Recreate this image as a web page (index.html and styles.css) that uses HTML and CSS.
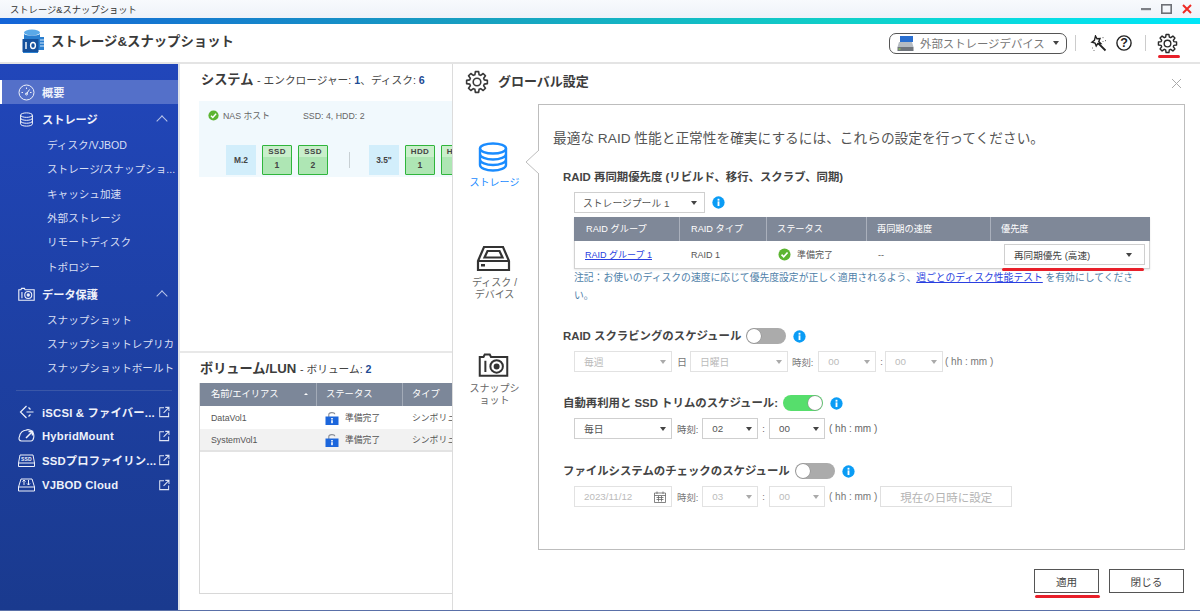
FILE: index.html
```html
<!DOCTYPE html>
<html lang="ja">
<head>
<meta charset="utf-8">
<title>ストレージ&amp;スナップショット</title>
<link rel="stylesheet" href="styles.css">
</head>
<body>
<svg class="defs" width="0" height="0" aria-hidden="true">
  <symbol id="gear" viewBox="0 0 24 24"><path fill="none" stroke="currentColor" stroke-width="1.6" stroke-linejoin="round" d="M9.91 4.69L10.36 1.63H13.64L14.09 4.69L15.68 5.35L18.17 3.51L20.49 5.83L18.65 8.32L19.31 9.91L22.37 10.36V13.64L19.31 14.09L18.65 15.68L20.49 18.17L18.17 20.49L15.68 18.65L14.09 19.31L13.64 22.37H10.36L9.91 19.31L8.32 18.65L5.83 20.49L3.51 18.17L5.35 15.68L4.69 14.09L1.63 13.64V10.36L4.69 9.91L5.35 8.32L3.51 5.83L5.83 3.51L8.32 5.35Z"/><circle cx="12" cy="12" r="3.8" fill="none" stroke="currentColor" stroke-width="1.6"/></symbol>
  <symbol id="ext" viewBox="0 0 14 14"><path fill="none" stroke="currentColor" stroke-width="1.2" d="M7 2H2V12.4H12.4V7.5M6.5 8L12.5 2M8.5 1.6H12.8V5.8"/></symbol>
  <symbol id="db" viewBox="0 0 24 24"><g fill="none" stroke="currentColor" stroke-width="1.6"><ellipse cx="12" cy="5" rx="9.5" ry="3.6"/><path d="M2.5 5V19C2.5 21 6.5 22.6 12 22.6S21.500 21 21.500 19V5M2.500 9.700C2.500 11.700 6.500 13.300 12 13.300S21.500 11.700 21.500 9.700M2.500 14.400C2.500 16.400 6.500 18 12 18S21.500 16.400 21.500 14.400"/></g></symbol>
  <symbol id="snap" viewBox="0 0 24 20"><g fill="none" stroke="currentColor" stroke-width="1.6"><path d="M1 4H4L5 2H9L10 4H23V19H1Z"/><path d="M5.500 7V16"/><circle cx="14.500" cy="11.500" r="5"/><circle cx="14.500" cy="11.500" r="1.600" fill="currentColor"/></g></symbol>
  <symbol id="info" viewBox="0 0 14 14"><circle cx="7" cy="7" r="6.600" fill="#0a9cf5"/><rect x="6" y="5.800" width="2" height="5" fill="#fff"/><rect x="6" y="3" width="2" height="2" fill="#fff"/></symbol>
  <symbol id="ok" viewBox="0 0 14 14"><circle cx="7" cy="7" r="6.500" fill="#5cb531"/><path d="M3.800 7.200L6.100 9.500L10.300 4.800" fill="none" stroke="#fff" stroke-width="1.800"/></symbol>
  <symbol id="lock" viewBox="0 0 14 14"><path d="M3.800 6V3.600C3.800 1 9.500 1 9.800 3.200" fill="none" stroke="#8a8f98" stroke-width="1.100"/><rect x="0.500" y="5.500" width="13" height="8.500" fill="#1c66dc"/><rect x="6.200" y="7" width="1.600" height="1.500" fill="#fff"/><rect x="6.200" y="9.200" width="1.600" height="3" fill="#fff"/></symbol>
</svg>

<div class="app">
  <div class="titlebar">
    <span class="titlebar-text">ストレージ&amp;スナップショット</span>
    <div class="win-controls">
      <svg width="10" height="10" viewBox="0 0 10 10"><rect y="4" width="10" height="2.200" fill="#7d8086"/></svg>
      <svg width="11" height="10" viewBox="0 0 11 10"><rect x="0.800" y="0.800" width="9.400" height="8.400" fill="none" stroke="#6d7076" stroke-width="1.600"/></svg>
      <svg width="10" height="10" viewBox="0 0 10 10"><path d="M1 1L9 9M9 1L1 9" stroke="#ee2b24" stroke-width="2"/></svg>
    </div>
  </div>
  <div class="rainbow"></div>

  <header class="header">
    <svg class="logo" width="24" height="24" viewBox="0 0 24 24">
      <ellipse cx="10" cy="3.500" rx="8" ry="3" fill="#5aa9e8"/>
      <path d="M2 5C4 7 16 7 18 5V8H22V21H16V24H1V11H2Z" fill="#2a7fd0"/>
      <rect x="0.500" y="10" width="16" height="13" fill="#14509c"/>
      <path d="M4 13V20M11 16.500m-2.400 0a2.400 3 0 1 0 4.800 0a2.400 3 0 1 0-4.800 0" fill="none" stroke="#fff" stroke-width="1.400"/>
      <path d="M18 11H22M18 14H22M18 17H22" stroke="#d5e8f8" stroke-width="1"/>
    </svg>
    <h1 class="app-title">ストレージ&amp;スナップショット</h1>
    <div class="header-tools">
      <div class="ext-pill">
        <svg width="17" height="15" viewBox="0 0 17 15"><rect x="3" y="0" width="13" height="6" fill="#2a6fd0"/><path d="M2 6H15L16.500 11H0.500Z" fill="#b5bbc2"/><rect x="0.500" y="11" width="16" height="4" fill="#70757c"/><rect x="1.500" y="12.500" width="2" height="1" fill="#9be04a"/></svg>
        <span class="ext-pill-label">外部ストレージデバイス</span>
        <i class="caret caret-dark"></i>
      </div>
      <i class="tool-sep"></i>
      <svg class="wand" width="17" height="17" viewBox="0 0 17 17"><path d="M5.500 1L7 3.800L10 3.600L8.800 6.500L10.800 8.500L7.800 8.500L6.200 11L5 8L2 7.200L4.400 5.400Z" fill="none" stroke="#222" stroke-width="1.400"/><path d="M8.500 8.500L15.500 15.500" stroke="#222" stroke-width="1.800"/><path d="M13 2V3.200M15.500 5V6.200M12.500 6.500H13.500M2 13H3M4 15V16" stroke="#777" stroke-width="1"/></svg>
      <svg class="help" width="16" height="16" viewBox="0 0 16 16"><circle cx="8" cy="8" r="7.100" fill="none" stroke="#222" stroke-width="1.400"/><text x="8" y="12.300" text-anchor="middle" class="help-q">?</text></svg>
      <i class="tool-sep tool-sep-2"></i>
      <svg class="gear-top" width="21" height="21"><use href="#gear"/></svg>
    </div>
  </header>

  <div class="body-row">
    <nav class="sidebar">
      <div class="nav-top nav-active">
        <svg class="nav-ico" width="17" height="17" viewBox="0 0 17 17"><g fill="none" stroke="currentColor" stroke-width="1"><circle cx="8.500" cy="8.500" r="7.500"/><path d="M8.500 10L11.500 5.500M3.500 8.500H5M12 8.500H13.500M8.500 3.500V5"/><circle cx="8.500" cy="10" r="1"/></g></svg>
        <span>概要</span>
      </div>
      <div class="nav-top nav-group">
        <svg class="nav-ico" width="15" height="15"><use href="#db"/></svg>
        <span class="nav-grow">ストレージ</span><i class="chev"></i>
      </div>
      <div class="nav-subs">
        <a class="nav-sub">ディスク/VJBOD</a>
        <a class="nav-sub">ストレージ/スナップショ...</a>
        <a class="nav-sub">キャッシュ加速</a>
        <a class="nav-sub">外部ストレージ</a>
        <a class="nav-sub">リモートディスク</a>
        <a class="nav-sub">トポロジー</a>
      </div>
      <div class="nav-top nav-group">
        <svg class="nav-ico" width="17" height="14"><use href="#snap"/></svg>
        <span class="nav-grow">データ保護</span><i class="chev"></i>
      </div>
      <div class="nav-subs">
        <a class="nav-sub">スナップショット</a>
        <a class="nav-sub">スナップショットレプリカ</a>
        <a class="nav-sub">スナップショットボールト</a>
      </div>
      <hr class="nav-div">
      <div class="nav-top nav-link">
        <svg class="nav-ico" width="16" height="14" viewBox="0 0 16 14"><path d="M8 1L2 7L8 13M8 7H15M10 2.500L12 4.500M10 11.500L12 9.500" fill="none" stroke="currentColor" stroke-width="1.200"/></svg>
        <span class="nav-grow">iSCSI &amp; ファイバー...</span><svg class="ext" width="12" height="12"><use href="#ext"/></svg>
      </div>
      <div class="nav-top nav-link">
        <svg class="nav-ico" width="17" height="13" viewBox="0 0 17 13"><path d="M3.500 12C1 12 0.500 9.500 1.500 7.500C2 4 5 1 8 1.200C10 0 14 1 15 3.500C16.500 6 16 12 13 12Z" fill="none" stroke="currentColor" stroke-width="1.100"/><path d="M8 9L14 3M10.500 2.500H14.500V6.500" fill="none" stroke="currentColor" stroke-width="1.500"/></svg>
        <span class="nav-grow">HybridMount</span><svg class="ext" width="12" height="12"><use href="#ext"/></svg>
      </div>
      <div class="nav-top nav-link">
        <svg class="nav-ico" width="17" height="13" viewBox="0 0 17 13"><path d="M2 1H15L16.500 9V12.500H0.500V9Z" fill="none" stroke="currentColor" stroke-width="1"/><path d="M0.500 9H16.500" stroke="currentColor" stroke-width="1"/><text x="8.500" y="6.800" text-anchor="middle" class="ssd-mini">SSD</text></svg>
        <span class="nav-grow">SSDプロファイリン...</span><svg class="ext" width="12" height="12"><use href="#ext"/></svg>
      </div>
      <div class="nav-top nav-link">
        <svg class="nav-ico" width="17" height="14" viewBox="0 0 17 14"><path d="M3 1H14L16.500 9V13H0.500V9ZM0.500 9H16.500M6 7V2M4.500 3.500L6 2L7.500 3.500M10.500 2V7M9 5.500L10.500 7L12 5.500" fill="none" stroke="currentColor" stroke-width="1"/></svg>
        <span class="nav-grow">VJBOD Cloud</span><svg class="ext" width="12" height="12"><use href="#ext"/></svg>
      </div>
    </nav>

    <main class="content">
      <section class="system">
        <h2 class="sec-title">システム <small class="sec-sub">- エンクロージャー: <b>1</b>、ディスク: <b>6</b></small></h2>
        <div class="enclosure">
          <div class="nas-line">
            <svg width="11" height="11"><use href="#ok"/></svg>
            <span class="nas-name">NAS ホスト</span>
            <span class="nas-disks">SSD: 4, HDD: 2</span>
          </div>
          <div class="bays">
            <div class="bay-label">M.2</div>
            <div class="bay"><span>SSD</span><b>1</b></div>
            <div class="bay"><span>SSD</span><b>2</b></div>
            <i class="bay-sep"></i>
            <div class="bay-label">3.5"</div>
            <div class="bay"><span>HDD</span><b>1</b></div>
            <div class="bay"><span>HDD</span><b>2</b></div>
          </div>
        </div>
      </section>
      <section class="volumes">
        <h2 class="sec-title">ボリューム/LUN <small class="sec-sub">- ボリューム: <b>2</b></small></h2>
        <div class="vol-box">
          <div class="vol-row vol-head">
            <span class="vol-name">名前/エイリアス<i class="sort-dot"></i></span><span>ステータス</span><span>タイプ</span>
          </div>
          <div class="vol-row">
            <span class="vol-name">DataVol1</span><span class="vol-status"><svg width="14" height="14"><use href="#lock"/></svg>準備完了</span><span>シンボリューム</span>
          </div>
          <div class="vol-row vol-alt">
            <span class="vol-name">SystemVol1</span><span class="vol-status"><svg width="14" height="14"><use href="#lock"/></svg>準備完了</span><span>シンボリューム</span>
          </div>
        </div>
      </section>
    </main>
  </div>

  <div class="dialog">
    <div class="dlg-head">
      <svg class="dlg-gear" width="24" height="24"><use href="#gear"/></svg>
      <h2 class="dlg-title">グローバル設定</h2>
      <svg class="dlg-close" width="11" height="11" viewBox="0 0 11 11"><path d="M1 1L10 10M10 1L1 10" stroke="#aaa" stroke-width="1"/></svg>
    </div>
    <div class="dlg-body">
      <div class="tabs">
        <div class="tab tab-on">
          <svg width="30" height="30" viewBox="0 0 30 30"><g fill="none" stroke="#1a8cff" stroke-width="2.400"><ellipse cx="15" cy="6.500" rx="13" ry="5"/><path d="M2 6.500V23C2 26 8 28.500 15 28.500S28 26 28 23V6.500M2 12C2 15 8 17.500 15 17.500S28 15 28 12M2 17.500C2 20.500 8 23 15 23S28 20.500 28 17.500"/></g></svg>
          <span>ストレージ</span>
        </div>
        <div class="tab tab-disk">
          <svg width="35" height="27" viewBox="0 0 35 27"><g fill="none" stroke="#333" stroke-width="2.200"><path d="M8 2H27L33 16V25H2V16Z"/><path d="M2 16H33M11.500 6H23.500L26.500 12.500H8.500Z"/></g><rect x="5" y="19" width="4" height="2.500" fill="#333"/></svg>
          <span>ディスク /<br>デバイス</span>
        </div>
        <div class="tab tab-snap">
          <svg width="31" height="25"><use href="#snap"/></svg>
          <span>スナップシ<br>ョット</span>
        </div>
      </div>
      <div class="panel">
        <svg class="panel-arrow" width="14" height="24" viewBox="0 0 14 24"><path d="M14 0L1 12L14 24" fill="#fff" stroke="#bdbdbd"/></svg>
        <p class="intro">最適な RAID 性能と正常性を確実にするには、これらの設定を行ってください。</p>

        <h3 class="set-title set-first">RAID 再同期優先度 (リビルド、移行、スクラブ、同期)</h3>
        <div class="ctl-row">
          <div class="sel sel-pool"><span>ストレージプール 1</span><i class="caret caret-dark"></i></div>
          <svg class="info-ml" width="13" height="13"><use href="#info"/></svg>
        </div>
        <div class="raid-table">
          <div class="raid-row raid-head">
            <span>RAID グループ</span><span>RAID タイプ</span><span>ステータス</span><span>再同期の速度</span><span>優先度</span>
          </div>
          <div class="raid-row">
            <span><a class="link">RAID グループ 1</a></span>
            <span>RAID 1</span>
            <span class="raid-status"><svg width="13" height="13"><use href="#ok"/></svg>準備完了</span>
            <span>--</span>
            <div class="raid-prio"><div class="sel sel-prio"><span>再同期優先 (高速)</span><i class="caret caret-dark"></i></div></div>
          </div>
        </div>
        <p class="note">注記：お使いのディスクの速度に応じて優先度設定が正しく適用されるよう、<a class="link">週ごとのディスク性能テスト</a> を有効にしてください。</p>

        <h3 class="set-title set-scrub">RAID スクラビングのスケジュール
          <span class="switch"><i class="knob"></i></span>
          <svg class="set-info" width="13" height="13"><use href="#info"/></svg>
        </h3>
        <div class="ctl-row dis">
          <div class="sel sel-w98"><span>毎週</span><i class="caret"></i></div>
          <span class="ctl-lbl lbl-day">日</span>
          <div class="sel sel-w98"><span>日曜日</span><i class="caret"></i></div>
          <span class="ctl-lbl lbl-wide">時刻:</span>
          <div class="sel sel-w58"><span>00</span><i class="caret"></i></div>
          <span class="ctl-lbl colon-tight">:</span>
          <div class="sel sel-w58"><span>00</span><i class="caret"></i></div>
          <span class="ctl-hint hint-tight">( hh : mm )</span>
        </div>

        <h3 class="set-title set-auto">自動再利用と SSD トリムのスケジュール:
          <span class="switch switch-on"><i class="knob"></i></span>
          <svg class="set-info" width="13" height="13"><use href="#info"/></svg>
        </h3>
        <div class="ctl-row">
          <div class="sel sel-w98"><span>毎日</span><i class="caret caret-dark"></i></div>
          <span class="ctl-lbl">時刻:</span>
          <div class="sel sel-w56"><span>02</span><i class="caret caret-dark"></i></div>
          <span class="ctl-lbl colon">:</span>
          <div class="sel sel-w56"><span>00</span><i class="caret caret-dark"></i></div>
          <span class="ctl-hint">( hh : mm )</span>
        </div>

        <h3 class="set-title set-fs">ファイルシステムのチェックのスケジュール
          <span class="switch"><i class="knob"></i></span>
          <svg class="set-info" width="13" height="13"><use href="#info"/></svg>
        </h3>
        <div class="ctl-row dis">
          <div class="sel sel-w98"><span>2023/11/12</span><svg width="12" height="12" viewBox="0 0 12 12"><path d="M0.500 2H11.500V11.500H0.500ZM0.500 4.500H11.500M3 0.500V3M9 0.500V3M2.500 6.500H9.500M2.500 8.500H9.500M4.500 5V10.500M7.500 5V10.500" fill="none" stroke="#666" stroke-width="0.800"/></svg></div>
          <span class="ctl-lbl">時刻:</span>
          <div class="sel sel-w56"><span>03</span><i class="caret"></i></div>
          <span class="ctl-lbl colon">:</span>
          <div class="sel sel-w56"><span>00</span><i class="caret"></i></div>
          <span class="ctl-hint">( hh : mm )</span>
          <div class="now-btn">現在の日時に設定</div>
        </div>
      </div>
    </div>
    <div class="dlg-foot">
      <button class="btn btn-apply">適用</button>
      <button class="btn btn-close">閉じる</button>
    </div>
  </div>

  <i class="mark mark-gear"></i>
  <i class="mark mark-prio"></i>
  <i class="mark mark-apply"></i>
</div>
</body>
</html>
```

FILE: styles.css
```css
* { box-sizing: border-box; }
html, body { margin: 0; padding: 0; }
body {
  font-family: "Liberation Sans", "Noto Sans CJK JP", sans-serif;
  font-size: 10.600px;
  color: #444;
  background: #fff;
}
.defs { position: absolute; }
.app {
  position: relative;
  width: 1200px;
  height: 611px;
  overflow: hidden;
  display: flex;
  flex-direction: column;
  border-bottom: 1px solid #5a70a8;
}
h1, h2, h3, p { margin: 0; }
a { cursor: pointer; }

.titlebar {
  height: 18px;
  flex: none;
  display: flex;
  align-items: center;
  justify-content: space-between;
  padding: 0 8px 0 10px;
  background: linear-gradient(#f8fafd, #eef2f9);
}
.titlebar-text { font-size: 9.300px; color: #333; }
.win-controls { display: flex; align-items: center; gap: 10px; }
.rainbow {
  height: 6px;
  flex: none;
  background: linear-gradient(90deg, #1464d8 0%, #17a0c0 40%, #10cfc8 70%, #00e6f8 100%);
}

.header {
  height: 40px;
  flex: none;
  display: flex;
  align-items: center;
  padding-left: 22px;
  border-bottom: 2px solid #e4e4e4;
  background: #fff;
}
.logo { flex: none; margin-bottom: 5px; }
.app-title {
  font-size: 13.350px;
  font-weight: 700;
  color: #3a3a3a;
  margin: 0 0 5px 5px;
}
.header-tools {
  margin-left: auto;
  display: flex;
  align-items: center;
  padding-right: 22px;
}
.ext-pill {
  width: 178px;
  height: 21px;
  display: flex;
  align-items: center;
  padding: 0 7px;
  border: 1px solid #555;
  border-radius: 7px;
}
.ext-pill-label {
  font-size: 11.400px;
  color: #777;
  margin-left: 6px;
  flex: 1;
  white-space: nowrap;
}
.tool-sep { width: 1px; height: 16px; background: #ccc; margin: 0 14px 0 8px; }
.tool-sep-2 { margin: 0 11px 0 13px; }
.help { margin-left: 9px; }
.help-q { font-size: 12.500px; font-weight: 700; fill: #222; font-family: "Liberation Sans", sans-serif; }
.gear-top { color: #2a2a2a; }

.caret {
  flex: none;
  width: 0;
  height: 0;
  border-left: 3.500px solid transparent;
  border-right: 3.500px solid transparent;
  border-top: 4px solid #aaa;
}
.caret-dark { border-top-color: #444; }

.body-row { flex: 1; display: flex; min-height: 0; }

.sidebar {
  width: 180px;
  flex: none;
  padding-top: 16px;
  background: linear-gradient(#2146ba, #1a3a8e);
  border-right: 2px solid #dfe3ea;
  color: #fff;
}
.nav-top {
  height: 24.400px;
  display: flex;
  align-items: center;
  padding: 0 10px 0 18px;
  font-size: 11.200px;
  font-weight: 700;
  color: #eef1fa;
  white-space: nowrap;
}
.nav-ico { flex: none; width: 17px; margin-right: 7px; }
.nav-grow { flex: 1; }
.nav-active { background: #5470c9; border-left: 2px solid #fff; padding-left: 16px; }
.nav-group { margin-top: 2.700px; }
.chev {
  width: 8px;
  height: 8px;
  border-left: 1px solid #b8c4e8;
  border-top: 1px solid #b8c4e8;
  transform: rotate(45deg);
  margin: 4px 2px 0 0;
}
.nav-subs { padding-top: 1.400px; }
.nav-sub {
  display: block;
  height: 24.400px;
  line-height: 24.400px;
  padding-left: 47px;
  color: #d8dff3;
  font-size: 10.600px;
  white-space: nowrap;
  overflow: hidden;
}
.nav-div { border: 0; height: 1px; background: #3a57a8; margin: 9px 6px 8.500px 16px; }
.nav-link { font-size: 11.300px; letter-spacing: .2px; padding-right: 8px; }
.ext { flex: none; color: #dfe5f5; }
.ssd-mini { font-size: 5px; fill: currentColor; font-family: "Liberation Sans", sans-serif; font-weight: 700; }

.content {
  flex: 1;
  min-width: 0;
  background: #fff;
  overflow: hidden;
  display: flex;
  flex-direction: column;
}
.system { height: 289px; padding: 6px 0 0 21px; flex: none; border-bottom: 2px solid #e8e8e8; }
.sec-title { font-size: 13.200px; font-weight: 700; color: #3c3c3c; white-space: nowrap; line-height: 20px; }
.sec-sub { font-size: 10.700px; font-weight: 400; color: #444; }
.sec-sub b { color: #1d4a94; font-weight: 700; }
.enclosure { margin: 11px 0 0 -2px; height: 76px; width: 500px; background: #f1f9fd; padding: 8px 0 0 9px; }
.nas-line { display: flex; align-items: center; height: 13px; font-size: 8.800px; color: #666; }
.nas-name { margin-left: 4px; width: 80px; }
.bays { margin-top: 23px; padding-left: 18px; display: flex; }
.bay-label, .bay { width: 30px; height: 30px; margin-right: 6px; text-align: center; font-size: 8.400px; font-weight: 700; color: #444; }
.bay-label { background: #d2eefb; line-height: 30px; }
.bay { background: #aee6b4; border: 1px solid #2fb53c; border-radius: 1px; display: flex; flex-direction: column; }
.bay span { height: 11px; line-height: 11px; background: #c9efcb; font-size: 8px; letter-spacing: .4px; }
.bay b { flex: 1; line-height: 17px; font-size: 8.600px; }
.bay-sep { width: 1px; height: 16px; background: #c8d0d4; margin: 7px 19px 0 15px; }

.volumes { padding: 6px 0 0 20px; flex: 1; }
.vol-box { margin: 4px 0 0 -1px; width: 400px; height: 211px; border: 1px solid #d8d8d8; border-top: 0; }
.vol-row { display: grid; grid-template-columns: 117px 86px 120px; height: 23px; align-items: center; font-size: 8.800px; color: #555; white-space: nowrap; }
.vol-row > span { padding-left: 9px; }
.vol-row > .vol-name { position: relative; padding-left: 11px; }
.vol-head { background: #7c8799; color: #fff; font-size: 9.300px; }
.vol-head > span { border-right: 1px solid #a3abb8; height: 23px; line-height: 23px; }
.sort-dot { position: absolute; right: 8px; top: 10px; border-left: 2px solid transparent; border-right: 2px solid transparent; border-bottom: 2px solid #fff; }
.vol-alt { background: #f2f2f2; border-bottom: 2px solid #e3e3e3; }
.vol-row > .vol-status { display: flex; align-items: center; gap: 6px; padding-left: 8px; }

.dialog {
  position: absolute;
  left: 452px;
  top: 64px;
  right: 0;
  bottom: 0;
  background: #fff;
  border-left: 1px solid #dcdcdc;
  display: flex;
  flex-direction: column;
}
.dlg-head { height: 40px; flex: none; display: flex; align-items: flex-start; padding: 6px 18px 0 12px; }
.dlg-gear { color: #3a3a3a; flex: none; }
.dlg-title { font-size: 13px; font-weight: 700; color: #3c3c3c; margin-left: 9px; flex: 1; line-height: 24px; }
.dlg-close { flex: none; margin-top: 8px; }
.dlg-body { display: flex; flex: none; height: 446px; padding-right: 15px; }
.tabs { width: 85px; flex: none; text-align: center; color: #666; font-size: 10px; }
.tab { display: flex; flex-direction: column; align-items: center; line-height: 12px; width: 83px; }
.tab svg { margin-right: 2px; }
.tab-on { color: #1a8cff; margin-top: 38px; }
.tab-on svg { margin: 0 4px 5px 0; }
.tab-disk { margin-top: 56px; line-height: 11.500px; }
.tab-disk svg { margin-bottom: 5px; }
.tab-snap { margin-top: 52px; }
.tab-snap svg { color: #333; margin-bottom: 6px; }
.panel { position: relative; flex: 1; border: 1px solid #bdbdbd; padding: 0 0 0 14px; }
.panel-arrow { position: absolute; left: -14px; top: 45px; }
.intro { font-size: 13.700px; color: #555; margin-top: 25px; line-height: 18px; white-space: nowrap; }
.set-title { display: flex; align-items: center; gap: 5px; font-size: 11.400px; font-weight: 700; color: #444; margin-left: 10px; line-height: 16px; white-space: nowrap; height: 16px; }
.set-info { margin-left: 2px; }
.set-first { margin-top: 21px; }
.set-scrub { margin-top: 23px; }
.set-auto { margin-top: 23px; }
.set-fs { margin-top: 24px; }

.ctl-row { display: flex; align-items: center; margin: 7px 0 0 21px; height: 21px; }
.sel {
  display: flex;
  align-items: center;
  justify-content: space-between;
  height: 21px;
  padding: 0 5px 0 9px;
  border: 1px solid #cfcfcf;
  background: #fff;
  font-size: 9.800px;
  color: #555;
  white-space: nowrap;
  flex: none;
}
.sel-pool { width: 131px; padding-right: 7px; padding-left: 8px; }
.sel-w98 { width: 98px; }
.sel-w58 { width: 58px; }
.sel-w56 { width: 56px; }
.info-ml { margin-left: 7px; }
.ctl-lbl { font-size: 9.400px; color: #666; margin: 0 4px 0 5px; }
.lbl-day { margin: 0 3px 0 5px; font-size: 10px; }
.lbl-wide { margin: 0 5px 0 4px; }
.colon { margin: 0 4px 0 4px; }
.colon-tight { margin: 0 2px 0 4px; }
.ctl-hint { font-size: 10px; color: #666; white-space: nowrap; margin-left: 4px; }
.hint-tight { margin-left: 2px; }
.dis .sel { border-color: #e2e2e2; color: #bbb; }
.dis .ctl-lbl, .dis .ctl-hint { color: #777; }

.switch { position: relative; display: inline-block; width: 40px; height: 16px; border-radius: 8px; background: #ababab; flex: none; }
.knob { position: absolute; left: 1px; top: 1px; width: 14px; height: 14px; border-radius: 50%; background: #fff; box-shadow: 0 0 0 .5px #888; }
.switch-on { background: #56de6c; }
.switch-on .knob { left: 25px; }

.raid-table { margin: 4px 0 0 21px; width: 576px; border: 1px solid #d2d2d2; border-top: 0; box-shadow: 0 1px 2px rgba(0,0,0,.1); }
.raid-row { display: grid; grid-template-columns: 106px 87px 100px 124px 158px; height: 27px; align-items: center; font-size: 9px; color: #555; white-space: nowrap; }
.raid-row > span { padding-left: 10px; }
.raid-head { height: 24px; background: #7f8898; color: #fff; font-size: 9.200px; margin: 0 -1px; }
.raid-head > span { height: 24px; line-height: 24px; border-right: 1px solid #aab0bc; padding-left: 12px; }
.raid-head > span:nth-child(2) { padding-left: 11px; }
.raid-head > span:nth-child(n+3) { padding-left: 10px; }
.raid-head > span:last-child { border-right: 0; }
.raid-row > .raid-status { display: flex; align-items: center; gap: 6px; }
.raid-prio { padding-left: 12px; }
.sel-prio { width: 141px; height: 21px; padding: 0 12px 0 9px; color: #444; font-size: 9.600px; }
.link { color: #2a3fe0; text-decoration: underline; }
.note { margin: 0 45px 0 21px; font-size: 9.800px; line-height: 18px; color: #4d7ea8; }

.now-btn { width: 132px; height: 21px; margin-left: 3px; border: 1px solid #e0e0e0; color: #b4b4b4; font-size: 11.500px; display: flex; align-items: center; justify-content: center; white-space: nowrap; }

.dlg-foot { flex: 1; display: flex; justify-content: flex-end; align-items: flex-start; gap: 10px; padding: 19px 16px 0 0; }
.btn { height: 24px; background: #fff; border: 1px solid #555; font-family: inherit; font-size: 10.600px; color: #444; padding: 0; }
.btn-apply { width: 65px; }
.btn-close { width: 75px; }

.mark { position: absolute; height: 3px; border-radius: 2px; background: #e8202a; }
.mark-gear { left: 1158px; top: 55px; width: 22px; }
.mark-prio { left: 1002px; top: 268px; width: 142px; }
.mark-apply { left: 1035px; top: 595px; width: 65px; }
```
